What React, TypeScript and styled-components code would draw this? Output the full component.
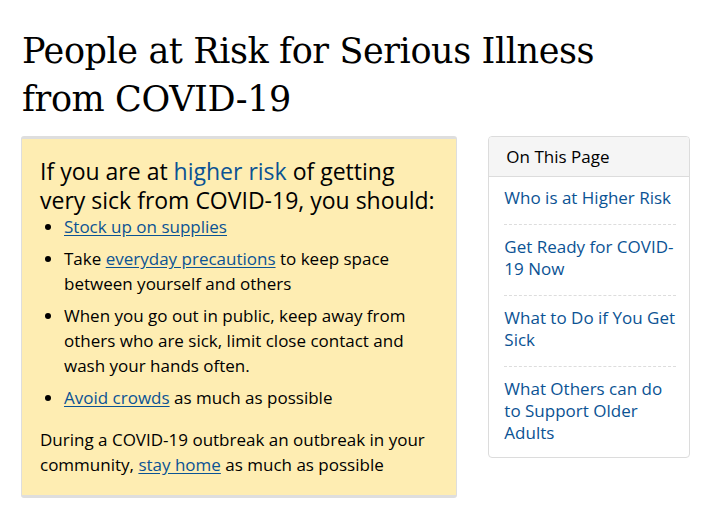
import styled, { createGlobalStyle } from 'styled-components';

const GlobalStyle = createGlobalStyle`
  body {
    margin: 0;
    background: #ffffff;
    font-family: 'Open Sans', 'Liberation Sans', sans-serif;
    color: #000000;
  }
`;

const Page = styled.div`
  padding: 27px 14px 0 21px;
`;

const Title = styled.h1`
  max-width: 620px;
  margin: 0 0 13px 1px;
  font-family: 'DejaVu Serif', 'Liberation Serif', serif;
  font-weight: 400;
  font-size: 35px;
  line-height: 48px;
  letter-spacing: -0.4px;
  color: #000000;
`;

const Columns = styled.div`
  display: flex;
  align-items: flex-start;
  gap: 31px;
`;

const Callout = styled.section`
  width: 437px;
  box-sizing: border-box;
  background: #feedb2;
  border: 1px solid #dedede;
  border-top-width: 3px;
  border-bottom-width: 3px;
  border-radius: 3px;
  padding: 18px;
`;

const Lead = styled.h2`
  margin: 0 0 -1px;
  font-weight: 400;
  font-size: 23px;
  line-height: 29px;
`;

const Highlight = styled.span`
  color: #0b5394;
`;

const List = styled.ul`
  margin: 0 0 17px;
  padding-left: 24px;
  font-size: 17px;
  line-height: 25px;
`;

const Item = styled.li`
  margin-bottom: 7px;
  &:last-child { margin-bottom: 0; }
`;

const TextLink = styled.a`
  color: #0b5394;
  text-decoration: underline;
  text-underline-offset: 2px;
`;

const Para = styled.p`
  margin: 0;
  font-size: 17px;
  line-height: 25px;
`;

const Sidebar = styled.nav`
  width: 202px;
  box-sizing: border-box;
  border: 1px solid #dcdcdc;
  border-radius: 4px;
  overflow: hidden;
`;

const SideHeader = styled.div`
  background: #f5f5f5;
  border-bottom: 1px solid #dcdcdc;
  padding: 8px 16px 8px 17px;
  font-size: 17px;
  line-height: 23px;
`;

const SideList = styled.ul`
  list-style: none;
  margin: 0;
  padding: 0 13px 0 15px;
`;

const SideItem = styled.li`
  padding: 11px 0 15px;
  font-size: 17px;
  line-height: 22px;
  &:first-child { padding-top: 10px; }
  &:last-child { padding-bottom: 13px; }
  & + & { border-top: 1px dashed #dddddd; }
`;

const SideLink = styled.a`
  color: #0b5394;
  text-decoration: none;
`;

export default function App() {
  return (
    <Page>
      <GlobalStyle />
      <Title>People at Risk for Serious Illness from COVID-19</Title>
      <Columns>
        <Callout>
          <Lead>
            If you are at <Highlight>higher risk</Highlight> of getting very sick from COVID-19, you should:
          </Lead>
          <List>
            <Item><TextLink href="#">Stock up on supplies</TextLink></Item>
            <Item>Take <TextLink href="#">everyday precautions</TextLink> to keep space between yourself and others</Item>
            <Item>When you go out in public, keep away from others who are sick, limit close contact and wash your hands often.</Item>
            <Item><TextLink href="#">Avoid crowds</TextLink> as much as possible</Item>
          </List>
          <Para>
            During a COVID-19 outbreak an outbreak in your community, <TextLink href="#">stay home</TextLink> as much as possible
          </Para>
        </Callout>
        <Sidebar>
          <SideHeader>On This Page</SideHeader>
          <SideList>
            <SideItem><SideLink href="#">Who is at Higher Risk</SideLink></SideItem>
            <SideItem><SideLink href="#">Get Ready for COVID-19 Now</SideLink></SideItem>
            <SideItem><SideLink href="#">What to Do if You Get Sick</SideLink></SideItem>
            <SideItem><SideLink href="#">What Others can do to Support Older Adults</SideLink></SideItem>
          </SideList>
        </Sidebar>
      </Columns>
    </Page>
  );
}
